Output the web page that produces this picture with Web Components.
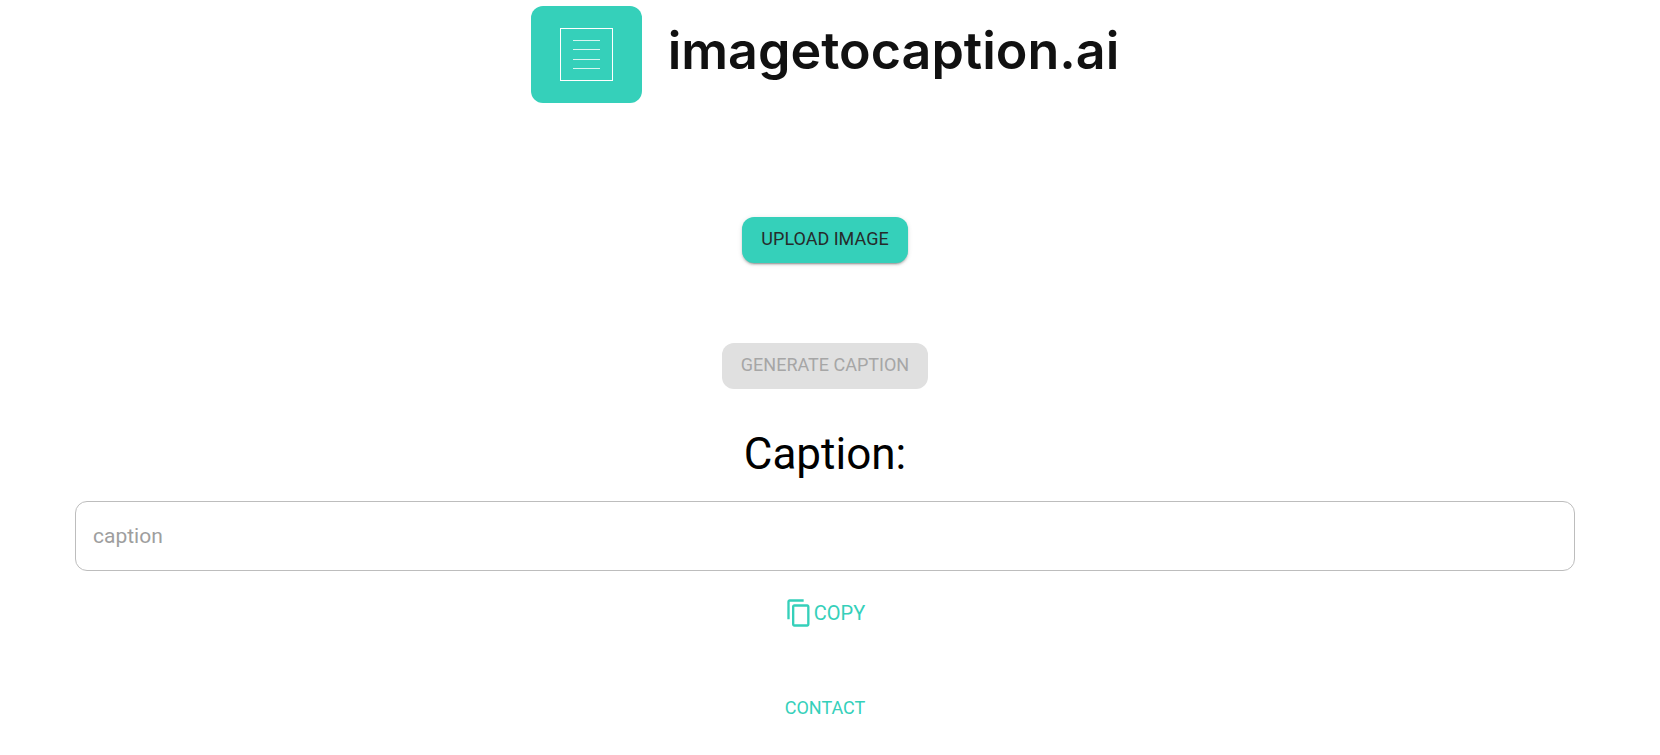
<!DOCTYPE html>
<html lang="en">
<head>
<meta charset="utf-8">
<meta name="viewport" content="width=device-width, initial-scale=1">
<title>imagetocaption.ai</title>
<style>
  body { margin: 0; background: #fff; color: #000; font-family: Roboto, "Open Sans", sans-serif; --accent: #35d0ba; }
</style>
</head>
<body>
<caption-app></caption-app>
<script>
const define = (name, html, setup) => customElements.define(name, class extends HTMLElement {
  constructor() {
    super();
    this.attachShadow({ mode: 'open' }).innerHTML = html;
  }
  connectedCallback() { if (setup) setup(this, this.shadowRoot); }
});

define('brand-logo', `
  <style>
    :host { display: flex; justify-content: center; align-items: flex-start; gap: 26px; }
    svg { flex: none; width: 111px; height: 97px; }
    span { font: 600 52px/90px Inter, sans-serif; color: #111; white-space: nowrap; }
  </style>
  <svg viewBox="0 0 111 97" fill="none" stroke="#fff" aria-hidden="true">
    <rect width="111" height="97" rx="12" fill="#35d0ba" stroke="none"/>
    <rect x="29.500" y="22.500" width="52" height="52"/>
    <g stroke-opacity=".8"><path d="M42 34.500h27M42 43.500h27M42 53.500h27M42 62.500h27"/></g>
  </svg>
  <span>imagetocaption.ai</span>`);

define('action-button', `
  <style>
    :host { display: block; }
    button { height: 46px; padding: 0 19px 2px; border: 0; border-radius: 12px; background: var(--accent);
      color: #262b2b; font: 400 18px/24px Roboto, sans-serif; text-transform: uppercase; cursor: pointer;
      box-shadow: 0 3px 1px -2px rgba(0,0,0,.2), 0 2px 2px rgba(0,0,0,.14), 0 1px 5px rgba(0,0,0,.12); }
    button:disabled { background: #e0e0e0; color: #a6a6a6; box-shadow: none; cursor: default; }
  </style>
  <button type="button"><slot></slot></button>`,
  (host, root) => { root.querySelector('button').disabled = host.hasAttribute('disabled'); });

define('caption-field', `
  <style>
    :host { display: flex; flex-direction: column; align-items: center; gap: 20px; align-self: stretch; }
    label { font-size: 44px; line-height: 54px; }
    input { box-sizing: border-box; width: 100%; height: 70px; padding: 0 17px; border: 1px solid #bdbdbd;
      border-radius: 12px; background: transparent; color: #222; font: 400 21px/30px Roboto, sans-serif; }
    input::placeholder { color: #9e9e9e; opacity: 1; }
  </style>
  <label for="caption">Caption:</label>
  <input id="caption" type="text" placeholder="caption">`);

define('copy-button', `
  <style>
    :host { display: block; }
    button { display: flex; align-items: center; gap: 1px; padding: 0; border: 0; background: none;
      color: var(--accent); font: 400 20px/30px Roboto, sans-serif; cursor: pointer; }
    svg { width: 28px; height: 30px; }
  </style>
  <button type="button">
    <svg viewBox="0 0 24 24" preserveAspectRatio="none" fill="currentColor" aria-hidden="true"><path d="M16 1H4c-1.100 0-2 .9-2 2v14h2V3h12V1zm3 4H8c-1.100 0-2 .9-2 2v14c0 1.100.9 2 2 2h11c1.100 0 2-.9 2-2V7c0-1.100-.9-2-2-2zm0 16H8V7h11v14z"/></svg>
    <span>COPY</span>
  </button>`);

define('contact-link', `
  <style>
    :host { display: block; }
    a { display: block; color: var(--accent); font-size: 18px; line-height: 24px; text-decoration: none; }
  </style>
  <a href="#contact"><slot></slot></a>`);

define('caption-app', `
  <style>
    :host { display: block; padding: 6px 85px 24px 75px; }
    main { display: flex; flex-direction: column; align-items: center; }
    .upload { margin-top: 114px; }
    .generate { margin-top: 80px; }
    caption-field { margin-top: 38px; }
    copy-button { margin-top: 27px; }
    contact-link { margin-top: 68px; }
  </style>
  <main>
    <brand-logo></brand-logo>
    <action-button class="upload">Upload image</action-button>
    <action-button class="generate" disabled>Generate caption</action-button>
    <caption-field></caption-field>
    <copy-button></copy-button>
    <contact-link>CONTACT</contact-link>
  </main>`);
</script>
</body>
</html>
